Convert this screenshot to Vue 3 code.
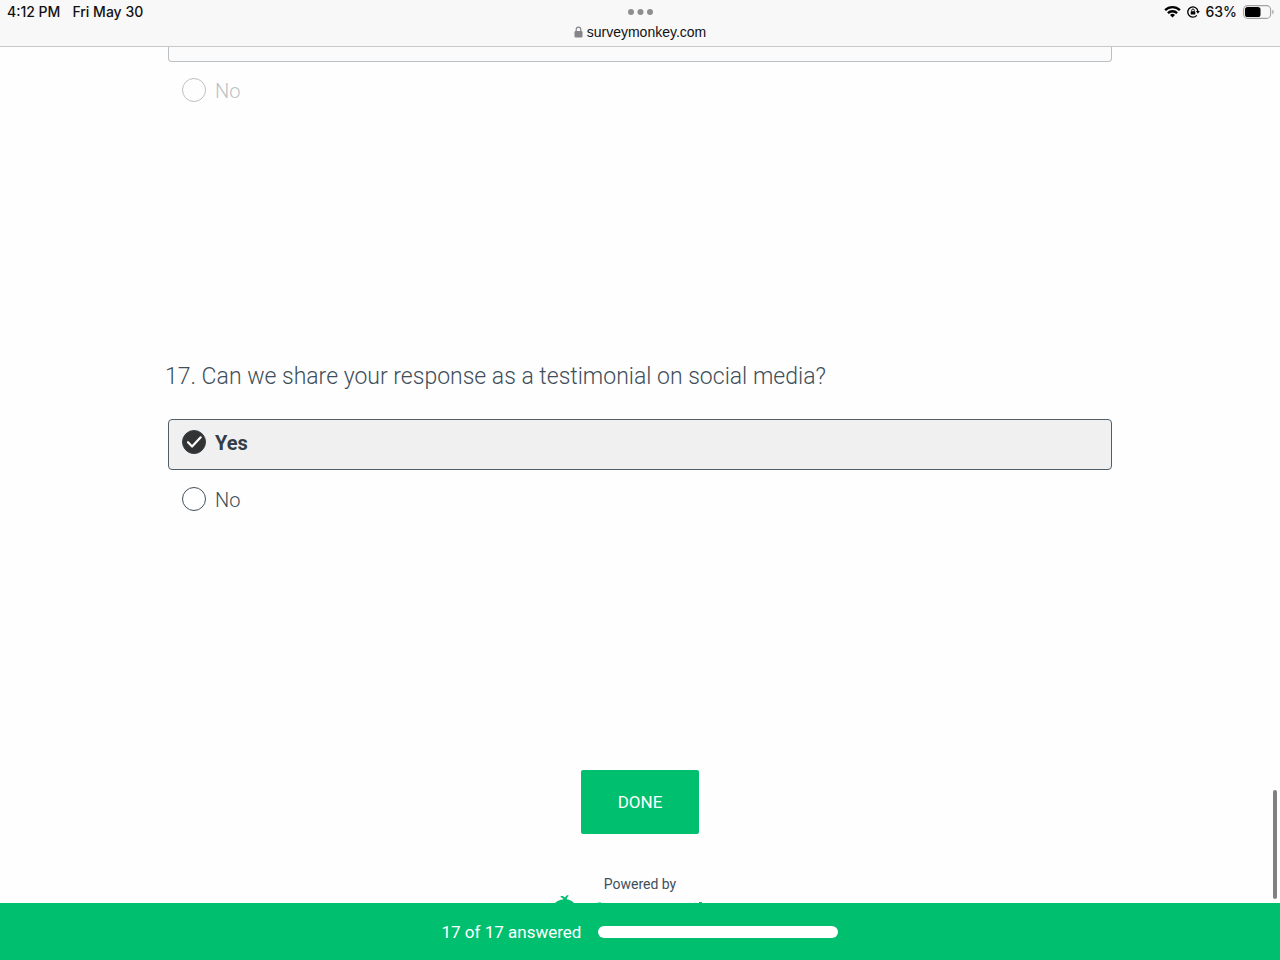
<script setup>
import { ref } from 'vue'

const previous = ref('')
const share = ref('yes')
const options = [
  { value: 'yes', label: 'Yes' },
  { value: 'no', label: 'No' }
]
const answered = 17
const total = 17
</script>

<template>
  <div class="screen">
    <header class="browser">
      <div class="status">
        <div class="clock"><span>4:12 PM</span><span>Fri May 30</span></div>
        <svg class="dots" width="26" height="6" viewBox="0 0 26 6" fill="#8e8e8f">
          <circle cx="3" cy="3" r="3" /><circle cx="12.5" cy="3" r="3" /><circle cx="22" cy="3" r="3" />
        </svg>
        <div class="indicators">
          <svg width="17" height="13" viewBox="0 0 17 13" fill="none" stroke="#000" stroke-width="2.3">
            <path d="M1.1 5.1a10.6 10.6 0 0 1 14.8 0" />
            <path d="M3.9 8.1a6.6 6.6 0 0 1 9.2 0" />
            <path d="M8.5 12.5 6 10a3.6 3.6 0 0 1 5 0z" fill="#000" stroke="none" />
          </svg>
          <svg width="13" height="12" viewBox="0 0 13 12" fill="none" stroke="#000">
            <path d="M9.8 9.3A5.1 5.1 0 1 1 10.9 5" stroke-width="1.3" />
            <path d="M8.9 5h3.9L10.9 7.8z" fill="#000" stroke="none" />
            <path d="M4.7 5.5V4.3a1.3 1.3 0 0 1 2.6 0v1.2" stroke-width="0.9" />
            <rect x="3.7" y="5.2" width="4.6" height="3.4" rx="0.6" fill="#000" stroke="none" />
          </svg>
          <span>63%</span>
          <svg class="battery" width="32" height="14" viewBox="0 0 32 14">
            <rect x="0.6" y="0.6" width="27" height="12.8" rx="4" fill="none" stroke="#a2a2a2" stroke-width="1.1" />
            <rect x="2" y="2" width="15.5" height="10" rx="2.6" fill="#000" />
            <path d="M29.3 4.8v4.4a2.4 2.4 0 0 0 0-4.4z" fill="#a2a2a2" />
          </svg>
        </div>
      </div>
      <div class="address">
        <svg width="9" height="12" viewBox="0 0 9 12">
          <path d="M2.2 6V3.4a2.3 2.3 0 0 1 4.6 0V6" fill="none" stroke="#86868a" stroke-width="1.2" />
          <rect x="0.5" y="5" width="8" height="6.5" rx="1.2" fill="#86868a" />
        </svg>
        <span>surveymonkey.com</span>
      </div>
    </header>

    <main class="page">
      <form class="survey" @submit.prevent>
        <div class="question faded">
          <div class="cut-box"></div>
          <label class="option">
            <input v-model="previous" type="radio" name="q16" value="no" /><span>No</span>
          </label>
        </div>

        <fieldset class="question">
          <legend>17. Can we share your response as a testimonial on social media?</legend>
          <label v-for="o in options" :key="o.value" class="option" :class="{ selected: share === o.value }">
            <input v-model="share" type="radio" name="q17" :value="o.value" />
            <svg v-if="share === o.value" class="tick" width="24" height="24" viewBox="0 0 24 24">
              <path d="M6 12.2l4.1 4.3 8.6-9.2" fill="none" stroke="#fff" stroke-width="2.2" stroke-linecap="round" stroke-linejoin="round" />
            </svg>
            <span>{{ o.label }}</span>
          </label>
        </fieldset>

        <button class="done" type="submit">DONE</button>
      </form>

      <div class="powered">
        <span>Powered by</span>
        <svg width="172" height="8" viewBox="0 0 172 8" fill="#00bf6f">
          <path d="M1 8c2.500-2.200 5-3.300 8.400-3.700C9 3.200 8 2.400 6.500 2.300L6.800 1c2-.2 3.300.5 4.100 1.600C11.500 1.300 12.600.3 14.200 0l.3 1C13.300 1.800 12.700 3 12.800 4.300 15.500 4.800 18 6 20 8z" />
          <path d="M44 8v-.5h3V8zM145 8v-1h3v1z" />
        </svg>
      </div>
      <div class="scroll-thumb"></div>
    </main>

    <footer class="progress">
      <span id="progress-label">{{ answered }} of {{ total }} answered</span>
      <div class="track" role="progressbar" aria-labelledby="progress-label" :aria-valuenow="answered" :aria-valuemax="total">
        <div class="fill" :style="{ width: (answered / total) * 100 + '%' }"></div>
      </div>
    </footer>
  </div>
</template>

<style>
body {
  margin: 0;
  background: #fff;
}
</style>

<style scoped>
* {
  box-sizing: border-box;
}
.screen {
  display: flex;
  flex-direction: column;
  min-height: 100vh;
  color: #404e5a;
  font-family: Roboto, "Liberation Sans", sans-serif;
  background: #fefefe;
}
.browser {
  color: #111;
  font-family: Inter, "Liberation Sans", sans-serif;
  font-size: 14px;
  background: #f8f8f8;
  border-bottom: 1px solid #c8c8c9;
}
.status {
  display: grid;
  grid-template-columns: 1fr auto 1fr;
  align-items: center;
  height: 23px;
  padding: 0 5px 0 7px;
  font-weight: 500;
}
.clock {
  display: flex;
  gap: 12px;
}
.indicators {
  display: flex;
  align-items: center;
  justify-content: flex-end;
  gap: 6px;
}
.address {
  display: flex;
  align-items: center;
  justify-content: center;
  gap: 4px;
  height: 23px;
  padding-bottom: 5px;
  font-family: "Liberation Sans", sans-serif;
}
.page {
  position: relative;
  flex: 1;
  display: flex;
  flex-direction: column;
  align-items: center;
}
.survey {
  display: flex;
  flex-direction: column;
  align-items: center;
  width: 100%;
  max-width: 944px;
}
.question {
  width: 100%;
  min-width: 0;
  margin: 0;
  padding: 0;
  border: 0;
}
.faded {
  opacity: 0.35;
  margin-bottom: 237px;
}
.cut-box {
  height: 15px;
  margin-bottom: 5px;
  background: #f7f7f7;
  border: 1px solid #404e5a;
  border-top: 0;
  border-radius: 0 0 4px 4px;
}
legend {
  margin-left: -3px;
  padding: 0 0 26px;
  font-size: 23px;
  line-height: 32px;
  font-weight: 300;
}
.option {
  position: relative;
  display: flex;
  align-items: flex-start;
  gap: 9px;
  height: 51px;
  margin-bottom: 6px;
  padding: 10px 13px;
  border: 1px solid transparent;
  border-radius: 4px;
  font-size: 20px;
  line-height: 26px;
  font-weight: 300;
}
.option.selected {
  color: #333e48;
  background: #f0f0f0;
  border-color: #505e6a;
  font-weight: 700;
}
.option input {
  appearance: none;
  flex: none;
  width: 24px;
  height: 24px;
  margin: 0;
  border: 1px solid #404e5a;
  border-radius: 50%;
  background: #fff;
}
.option.selected input {
  background: #333;
  border-color: #333e48;
}
.tick {
  position: absolute;
  top: 10px;
  left: 13px;
  pointer-events: none;
}
.done {
  width: 118px;
  height: 64px;
  margin-top: 237px;
  border: 0;
  border-radius: 2px;
  color: #fff;
  background: #00bf6f;
  font: 400 17px/24px Roboto, "Liberation Sans", sans-serif;
}
.powered {
  display: flex;
  flex-direction: column;
  align-items: center;
  margin-top: 40px;
  font-size: 14px;
  line-height: 20px;
}
.powered svg {
  margin-top: 1px;
}
.scroll-thumb {
  position: absolute;
  right: 3px;
  bottom: 4px;
  width: 4px;
  height: 109px;
  border-radius: 2px;
  background: #808080;
}
.progress {
  display: flex;
  align-items: center;
  justify-content: center;
  gap: 17px;
  height: 57px;
  color: #fff;
  font-size: 17px;
  line-height: 24px;
  background: #00bf6f;
}
.track {
  width: 240px;
  height: 12px;
  border-radius: 6px;
  background: #00a862;
}
.fill {
  height: 100%;
  border-radius: 6px;
  background: #fff;
}
</style>
